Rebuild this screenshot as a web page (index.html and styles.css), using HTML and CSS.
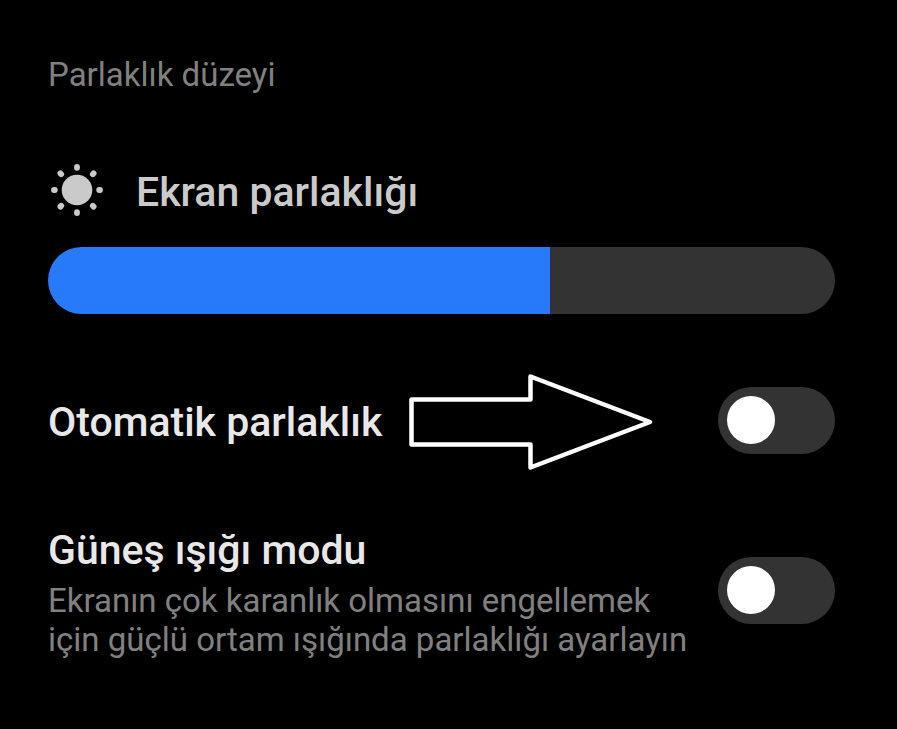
FILE: index.html
```html
<!DOCTYPE html>
<html lang="tr">
<head>
    <meta charset="UTF-8">
    <meta name="viewport" content="width=device-width, initial-scale=1.0">
    <title>Parlaklık düzeyi</title>
    <link rel="stylesheet" href="styles.css">
</head>
<body>
    <main class="settings">
        <h1 class="section-title">Parlaklık düzeyi</h1>

        <div class="brightness-header">
            <svg class="sun-icon" viewBox="0 0 52 52" aria-hidden="true">
                <circle cx="26" cy="26" r="15.3" fill="currentColor"/>
                <g stroke="currentColor" stroke-width="5.8" stroke-linecap="round">
                    <path d="M26 3v.8M26 48.2v.8M3 26h.8M48.2 26h.8"/>
                    <path d="M9.4 9.4l.8.8M41.8 41.8l.8.8M9.4 42.6l.8-.8M41.8 10.2l.8-.8"/>
                </g>
            </svg>
            <label class="label dim" for="brightness">Ekran parlaklığı</label>
        </div>
        <input class="slider" type="range" id="brightness" min="0" max="1000" value="638" style="--level: 63.8%">

        <div class="row auto-row">
            <label class="label" for="autoBrightness">Otomatik parlaklık</label>
            <svg class="arrow" viewBox="0 0 244 96" aria-hidden="true">
                <path d="M2.5 25.5H121.5V2.5L241 48L121.5 93.5V70.5H2.5Z" fill="none" stroke="currentColor" stroke-width="4.5" stroke-linejoin="round"/>
            </svg>
            <input class="switch" type="checkbox" role="switch" id="autoBrightness">
        </div>

        <div class="row sun-row">
            <div class="text">
                <label class="label" for="sunlightMode">Güneş ışığı modu</label>
                <p class="description" id="sunlightInfo">Ekranın çok karanlık olmasını engellemek için güçlü ortam ışığında parlaklığı ayarlayın</p>
            </div>
            <input class="switch" type="checkbox" role="switch" id="sunlightMode" aria-describedby="sunlightInfo">
        </div>
    </main>

    <script>
        var slider = document.getElementById("brightness");
        slider.addEventListener("input", function () {
            slider.style.setProperty("--level", slider.value / 10 + "%");
        });
    </script>
</body>
</html>
```

FILE: styles.css
```css
* {
    box-sizing: border-box;
}
body {
    font-family: Roboto, sans-serif;
    background-color: #000;
    color: #e8e8e8;
    margin: 0;
}
.settings {
    display: flex;
    flex-direction: column;
    padding: 55px 62px 55px 48px;
}
.section-title, .description {
    margin: 0;
    font-size: 33px;
    font-weight: 400;
    line-height: 39px;
    color: #808080;
}
.label {
    display: block;
    font-size: 41px;
    font-weight: 500;
    line-height: 48px;
}
.dim, .sun-icon {
    color: #cacaca;
}
.brightness-header {
    display: flex;
    align-items: flex-end;
    gap: 33px;
    margin-top: 70px;
    padding-left: 3px;
}
.sun-icon {
    width: 52px;
    height: 52px;
}
.slider {
    appearance: none;
    width: 100%;
    height: 67px;
    margin: 31px 0 0;
    border-radius: 34px;
    background: linear-gradient(to right, #277bfa var(--level), #333 var(--level));
    cursor: pointer;
}
.slider::-webkit-slider-thumb {
    appearance: none;
    width: 1px;
    height: 67px;
    background: transparent;
}
.row {
    display: flex;
    justify-content: space-between;
}
.auto-row {
    align-items: center;
    margin-top: 60px;
}
.arrow {
    flex-shrink: 0;
    width: 244px;
    height: 96px;
    margin: 0 auto 0 27px;
    color: #fff;
}
.sun-row {
    align-items: flex-start;
    gap: 20px;
    margin-top: 56px;
}
.description {
    margin-top: 7px;
}
.switch {
    appearance: none;
    flex-shrink: 0;
    width: 117px;
    height: 67px;
    margin: 0;
    padding: 9px;
    border-radius: 34px;
    background: #333;
    cursor: pointer;
}
.auto-row .switch {
    margin-bottom: 4px;
}
.sun-row .switch {
    margin-top: 31px;
}
.switch::before {
    content: "";
    display: block;
    width: 48px;
    height: 48px;
    border-radius: 50%;
    background: #fff;
}
.switch:checked {
    background: #277bfa;
}
.switch:checked::before {
    margin-left: auto;
}
```
